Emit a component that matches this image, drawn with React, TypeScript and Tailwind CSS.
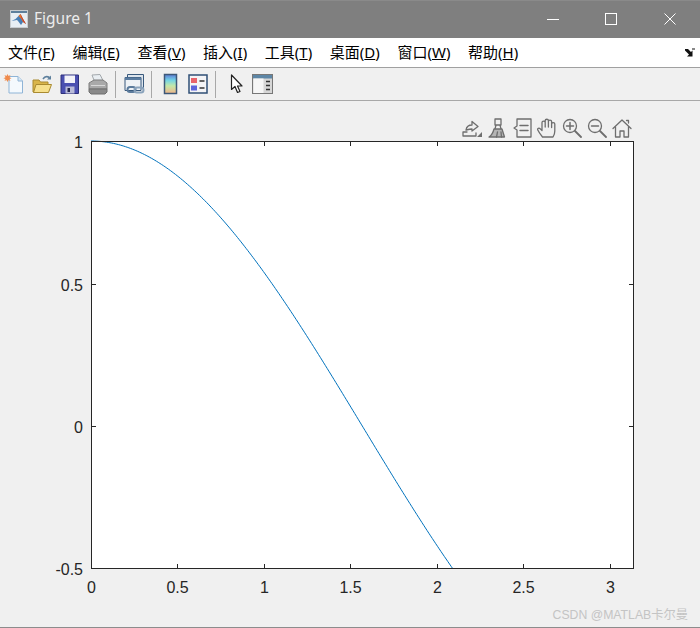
import React from 'react';

const menus = [
  { label: '文件', key: 'F' },
  { label: '编辑', key: 'E' },
  { label: '查看', key: 'V' },
  { label: '插入', key: 'I' },
  { label: '工具', key: 'T' },
  { label: '桌面', key: 'D' },
  { label: '窗口', key: 'W' },
  { label: '帮助', key: 'H' },
];

const X0 = 91;
const X1 = 634;
const Y0 = 141;
const Y1 = 569;
const sx = (v: number) => X0 + (v / Math.PI) * (X1 - X0);
const sy = (v: number) => Y0 + ((1 - v) / 1.5) * (Y1 - Y0);

const xTicks = [0, 0.5, 1, 1.5, 2, 2.5, 3];
const yTicks = [-0.5, 0, 0.5, 1];

const curve = Array.from({ length: 211 }, (_, i) => {
  const x = (i / 210) * 2.0944;
  return `${sx(x).toFixed(2)},${sy(Math.cos(x)).toFixed(2)}`;
}).join(' ');

const NewIcon = () => (
  <svg width="22" height="22" viewBox="0 0 22 22">
    <path d="M6 3.500h9l4.500 4.500v12H6z" fill="#f4f9fd" stroke="#8fb4d6" />
    <path d="M15 3.500V8h4.500" fill="#d5e6f4" stroke="#8fb4d6" />
    <path d="M4.500 1l1 2 2-1-1 2.200 2 1-2 .8 1 2-2-1-1 2-1-2-2 1 1-2-2-.8 2-1-1-2.200 2 1z" fill="#f08a4b" />
  </svg>
);

const OpenIcon = () => (
  <svg width="22" height="22" viewBox="0 0 22 22">
    <path d="M2 7h6l1.500 2H17v10H2z" fill="#d9b54a" stroke="#a98a30" />
    <path d="M2.500 19.500l2.500-8h15.500l-3 8z" fill="#f6e08c" stroke="#a98a30" />
    <path d="M12 6c1.500-2.500 4-3 6.500-1.500" fill="none" stroke="#5d7f9c" strokeWidth="1.500" />
    <path d="M20 2.500v4h-4z" fill="#5d7f9c" />
  </svg>
);

const SaveIcon = () => (
  <svg width="20" height="22" viewBox="0 0 20 22">
    <path d="M1 2h17.500v18.500H1z" fill="#4a4fb0" stroke="#2c2f7a" />
    <path d="M4.500 2.500h10.500v7.500H4.500z" fill="#f2f2f8" />
    <path d="M5.500 13.500h9v7h-9z" fill="#b9bbd8" />
    <path d="M7.500 15h2.500v4H7.500z" fill="#24264f" />
  </svg>
);

const PrintIcon = () => (
  <svg width="20" height="22" viewBox="0 0 20 22">
    <path d="M4 2l8-.5 3.500 7H6.500z" fill="#e9eef2" stroke="#a3a8ac" />
    <path d="M1 10l5-3h9l4 3v6H1z" fill="#a9a9a9" stroke="#7c7c7c" />
    <path d="M1 16h18v3l-2 2H3l-2-2z" fill="#8a8a8a" stroke="#6e6e6e" />
    <path d="M3 12.500h14" stroke="#d8d8d8" />
  </svg>
);

const LinkIcon = () => (
  <svg width="22" height="22" viewBox="0 0 22 22">
    <path d="M3.500 1.500h16v13h-16z" fill="#dce4ec" stroke="#39597c" />
    <path d="M1 4.500h16v13H1z" fill="#eef2f6" stroke="#39597c" />
    <path d="M1 4.500h16v2.500H1z" fill="#5a7ca0" />
    <rect x="3.500" y="14" width="8" height="5" rx="2.500" fill="none" stroke="#5b7b9c" strokeWidth="2" />
    <rect x="10.500" y="14.500" width="9" height="5" rx="2.500" fill="none" stroke="#8aa3bc" strokeWidth="2" />
  </svg>
);

const ColorbarIcon = () => (
  <svg width="16" height="22" viewBox="0 0 16 22">
    <defs>
      <linearGradient id="cbar" x1="0" y1="0" x2="0" y2="1">
        <stop offset="0" stopColor="#5e7bd6" />
        <stop offset="0.3" stopColor="#72d4e6" />
        <stop offset="0.6" stopColor="#c4e8a8" />
        <stop offset="1" stopColor="#f0b48a" />
      </linearGradient>
    </defs>
    <rect x="1.500" y="1.500" width="12" height="19" fill="url(#cbar)" stroke="#3d5878" strokeWidth="1.500" />
  </svg>
);

const LegendIcon = () => (
  <svg width="20" height="20" viewBox="0 0 20 20">
    <rect x="1" y="1" width="18" height="18" fill="#f4f4f6" stroke="#2f4f75" strokeWidth="1.500" />
    <rect x="3" y="4" width="6" height="5" fill="#e8636b" />
    <rect x="3" y="11.500" width="6" height="5" fill="#5c63dc" />
    <path d="M11.500 7h5M11.500 14h5" stroke="#333" strokeWidth="1.500" />
  </svg>
);

const PointerIcon = () => (
  <svg width="14" height="20" viewBox="0 0 14 20">
    <path d="M1.500 1v14.500l3.500-3 2.500 6 2.500-1-2.500-5.500h4.500z" fill="#fff" stroke="#222" strokeWidth="1.200" strokeLinejoin="round" />
  </svg>
);

const PanelIcon = () => (
  <svg width="21" height="20" viewBox="0 0 21 20">
    <rect x="0.500" y="0.500" width="20" height="19" fill="#d6d6d6" stroke="#777" />
    <rect x="1" y="1" width="19" height="3.500" fill="#5d86a6" />
    <rect x="1.500" y="4.500" width="10" height="14.500" fill="#f6f6f6" />
    <path d="M14 7.500h4M14 11.500h4M14 15.500h4" stroke="#333" strokeWidth="1.500" />
  </svg>
);

const Sep = () => <div className="w-px h-[27px] bg-[#a8a8a8]" />;

const Glyph = ({ width, children }: { width: number; children: React.ReactNode }) => (
  <svg width={width} height="20" viewBox={`0 0 ${width} 20`} fill="none" stroke="#6e6e6e" strokeWidth="1.300" strokeLinejoin="round" strokeLinecap="round">
    {children}
  </svg>
);

const axesTools = [
  <Glyph width={21} key="edit">
    <path d="M1 18v-4h4M1 18h13v-3" />
    <path d="M4 12c.5-3 3-5 6-5V3.500l6 5-6 4.500V11c-2 0-4 .5-6 1z" />
    <path d="M20 14v5h-5z" fill="#6e6e6e" stroke="none" />
  </Glyph>,
  <Glyph width={20} key="brush">
    <path d="M7 1h6v6H7zM8 7l-1 4M12 7l1 4" />
    <path d="M6 11h8l2.500 8H1c2.500-1.500 4-4 5-8z" fill="#b4b4b4" />
    <path d="M9.500 14l-1 5M13 14l.5 5" />
  </Glyph>,
  <Glyph width={19} key="legend">
    <path d="M4 1h14v18H4v-7L1 10l3-2z" />
    <path d="M7 7.500h8M7 12.500h8" strokeWidth="1.500" />
  </Glyph>,
  <Glyph width={20} key="hand">
    <path d="M5.500 19C3.500 16.500 2 14.500.8 12c-.6-1.600 1.200-2.400 2.400-1.200L5 12.500V4.500c0-1.800 3.200-1.800 3.200 0V9V2.600c0-1.800 3.200-1.800 3.200 0V9V3.500c0-1.800 3.200-1.800 3.200 0V9.500V6c0-1.800 3.200-1.800 3.200 0v7c0 3-1 4.500-1.800 6z" />
  </Glyph>,
  <Glyph width={20} key="in">
    <circle cx="8" cy="8" r="6.500" />
    <path d="M13 13l6 6" strokeWidth="1.800" />
    <path d="M8 4.500v7M4.500 8h7" strokeWidth="1.500" />
  </Glyph>,
  <Glyph width={20} key="out">
    <circle cx="8" cy="8" r="6.500" />
    <path d="M13 13l6 6" strokeWidth="1.800" />
    <path d="M4.500 8h7" strokeWidth="1.500" />
  </Glyph>,
  <Glyph width={20} key="home">
    <path d="M1 10.500L10 2l9 8.500" />
    <path d="M3.500 9v10H8v-6h4v6h4.500V9" />
    <path d="M14.500 2.500h2V5" />
  </Glyph>,
];

const LabelStyle = 'fill-[#262626] text-[16px] font-["Liberation_Sans",Arial,sans-serif]';

const App: React.FC = () => {
  return (
    <div className="w-[700px] h-[628px] flex flex-col overflow-hidden bg-[#f0f0f0] font-['Noto_Sans','Noto_Sans_CJK_SC',sans-serif]">
      {/* Title bar */}
      <div className="h-[38px] shrink-0 flex items-center bg-[#7f7f7f] border-t border-[#8a8a8a] pl-[10px] pb-px">
        <svg width="18" height="18" viewBox="0 0 18 18">
          <rect x="0.500" y="0.500" width="17" height="17" fill="#e8eef4" stroke="#c8ccd0" />
          <rect x="1" y="1" width="16" height="2" fill="#5d7f9c" />
          <path d="M1.500 11l4-2 3-3 2-2 2.500 5 3 5-3-2-2 3-3-4-1-1z" fill="#4a7fb5" />
          <path d="M8.500 6l2-2 2.500 5 3 5-3-2-1.500-3z" fill="#e8732c" />
          <path d="M10.500 4l2.500 5 3 5-2.500-2-2-4z" fill="#c9402a" />
        </svg>
        <span className="ml-[6px] text-[15.5px] text-[#ececec]">Figure 1</span>
        <div className="ml-auto flex items-center">
          <div className="w-[12px] h-px bg-white mr-[46px] mt-px" />
          <div className="w-[12px] h-[12px] border border-white mr-[47px]" />
          <svg width="12" height="12" viewBox="0 0 12 12" className="mr-[24px]">
            <path d="M.5.5l11 11M11.500.5l-11 11" stroke="#fff" fill="none" />
          </svg>
        </div>
      </div>

      {/* Menu bar */}
      <div className="h-[29px] shrink-0 flex items-center bg-white pl-[8px] pr-[5px] gap-[17.6px] text-[15px] text-black border-b border-[#a0a0a0] box-content">
        {menus.map((m) => (
          <span key={m.key} className="whitespace-nowrap">
            {m.label}(<span className="underline">{m.key}</span>)
          </span>
        ))}
        <svg width="10" height="9" viewBox="0 0 10 9" className="ml-auto">
          <path d="M0 1h3l3 3 1.500-1.500V8.500H2L4 6.500 0 2.500z" fill="#111" />
          <path d="M7 0h3v2H7z" fill="#888" />
        </svg>
      </div>

      {/* Figure toolbar */}
      <div className="h-[32px] shrink-0 flex items-center bg-[#f0f0f0] border-b border-[#a8a8a8] box-content pl-[3px]">
        <NewIcon />
        <div className="ml-[6px]"><OpenIcon /></div>
        <div className="ml-[7px]"><SaveIcon /></div>
        <div className="ml-[8px]"><PrintIcon /></div>
        <div className="ml-[7px]"><Sep /></div>
        <div className="ml-[8px]"><LinkIcon /></div>
        <div className="ml-[5px]"><Sep /></div>
        <div className="ml-[11px]"><ColorbarIcon /></div>
        <div className="ml-[9px]"><LegendIcon /></div>
        <div className="ml-[7px]"><Sep /></div>
        <div className="ml-[14px]"><PointerIcon /></div>
        <div className="ml-[8px]"><PanelIcon /></div>
      </div>

      {/* Figure area */}
      <div className="relative flex-1 flex flex-col border-b border-[#8c8c8c] bg-[#f0f0f0]">
        <div className="h-[40px] shrink-0 flex items-start justify-end pt-[17px] pr-[68px] gap-[5px]">
          {axesTools.map((t, i) => (
            <div key={i} className="shrink-0">{t}</div>
          ))}
        </div>

        <svg width="700" height="498" viewBox="0 129 700 498" className="block -mt-[12px]">
          <rect x={X0} y={Y0} width={X1 - X0} height={Y1 - Y0} fill="#fff" />
          <polyline points={curve} fill="none" stroke="#0072bd" strokeWidth="1" />
          <rect x={X0 + 0.5} y={Y0 + 0.5} width={X1 - X0 - 1} height={Y1 - Y0 - 1} fill="none" stroke="#262626" />
          {xTicks.map((v) => {
            const x = Math.round(sx(v)) + 0.5;
            return (
              <g key={v}>
                <path d={`M${x} ${Y0}v5M${x} ${Y1}v-5`} stroke="#262626" />
                <text x={x} y={Y1 + 24} textAnchor="middle" className={LabelStyle}>{v}</text>
              </g>
            );
          })}
          {yTicks.map((v) => {
            const y = Math.min(Math.round(sy(v)) + 0.5, Y1 - 0.5);
            return (
              <g key={v}>
                <path d={`M${X0} ${y}h5M${X1} ${y}h-5`} stroke="#262626" />
                <text x={83} y={y + 6} textAnchor="end" className={LabelStyle}>{v}</text>
              </g>
            );
          })}
        </svg>

        {/* Watermark */}
        <span className="absolute right-[12px] bottom-[3px] text-[12.25px] text-[#c4c4c4] whitespace-nowrap font-['Liberation_Sans','Noto_Sans_CJK_SC',sans-serif]">
          CSDN @MATLAB卡尔曼
        </span>
      </div>
    </div>
  );
};

export default App;
